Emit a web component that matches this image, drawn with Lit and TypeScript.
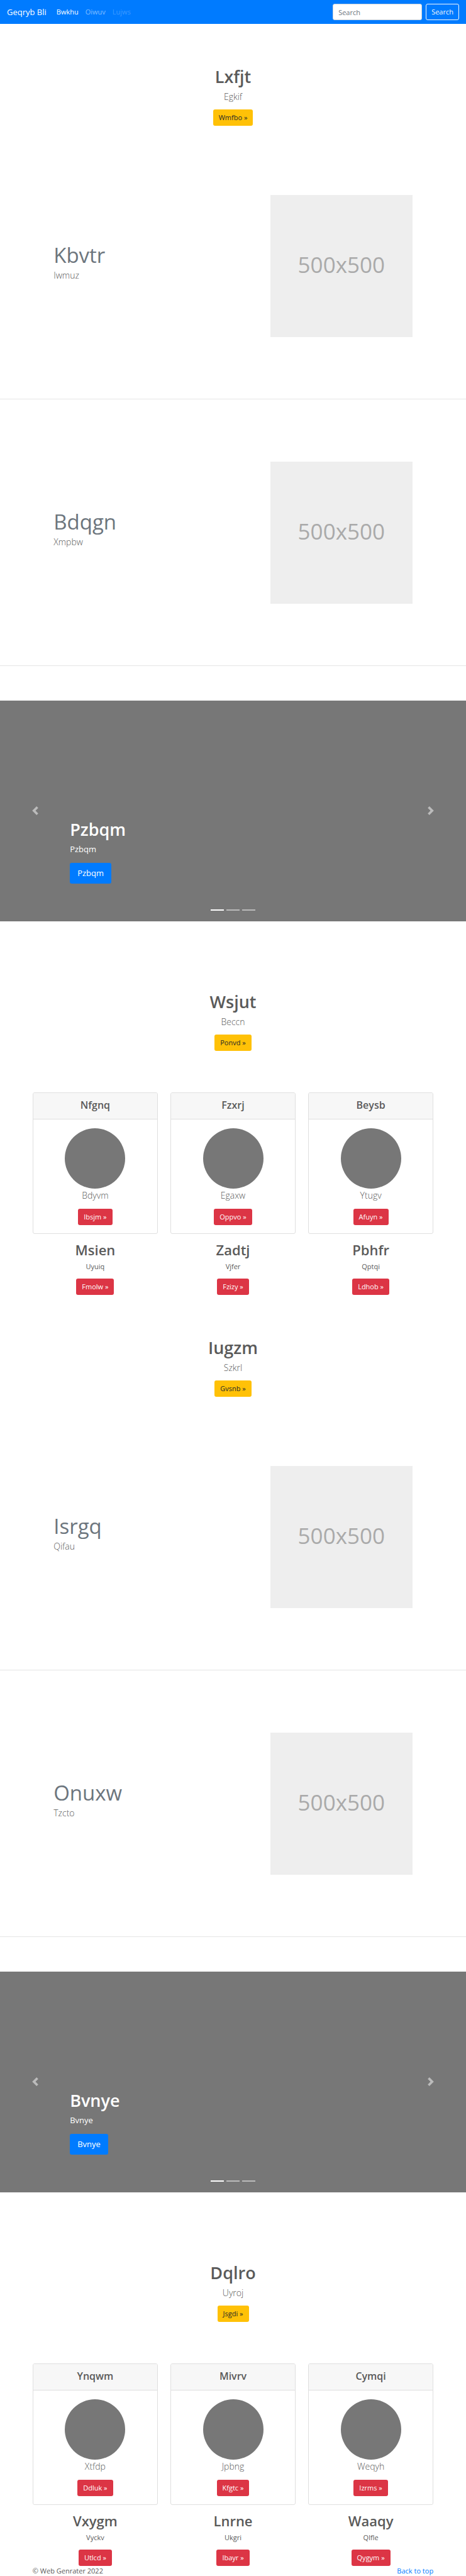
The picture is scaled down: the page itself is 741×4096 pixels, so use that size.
import { LitElement, html, css, svg } from "lit";
import { customElement, property, state } from "lit/decorators.js";
import { classMap } from "lit/directives/class-map.js";

const base = css`
  *,
  *::before,
  *::after {
    box-sizing: border-box;
  }
  h1,
  h2,
  h3,
  h4,
  p {
    margin: 0;
  }
  a {
    text-decoration: none;
  }
  .lead {
    font-size: 14px;
    line-height: 21px;
    font-weight: 300;
  }
  .btn {
    display: inline-block;
    height: 26px;
    padding: 0 8px;
    border: 1px solid transparent;
    border-radius: 3px;
    font: 400 11px/24px "Open Sans", "Noto Sans", sans-serif;
    white-space: nowrap;
    cursor: pointer;
  }
  .warning {
    background: #ffc107;
    color: #212529;
  }
  .danger {
    background: #dc3545;
    color: #fff;
  }
  .primary {
    background: #007bff;
    color: #fff;
  }
  .large {
    height: 33px;
    padding: 0 11px;
    font-size: 13px;
    line-height: 31px;
  }
`;

@customElement("site-nav")
export class SiteNav extends LitElement {
  static styles = [
    base,
    css`
      :host {
        display: block;
        background: #007bff;
      }
      .bar {
        display: flex;
        align-items: center;
        height: 38px;
        padding: 0 11px;
      }
      .brand {
        margin-right: 16px;
        color: #fff;
        font-size: 13px;
        line-height: 21px;
      }
      .links {
        display: flex;
        flex: 1;
        gap: 11px;
        margin: 0;
        padding: 0;
        list-style: none;
        line-height: 16px;
      }
      .link {
        color: rgba(255, 255, 255, 0.5);
      }
      .active {
        color: #fff;
      }
      .disabled {
        color: rgba(255, 255, 255, 0.25);
      }
      .search {
        display: flex;
        gap: 6px;
      }
      .field {
        width: 142px;
        height: 26px;
        padding: 0 8px;
        border: 1px solid #ced4da;
        border-radius: 3px;
        background: #fff;
        color: #495057;
        font: 400 11px/16px "Open Sans", "Noto Sans", sans-serif;
      }
      .field::placeholder {
        color: #6c757d;
        opacity: 1;
      }
      .outline {
        border-color: #f8f9fa;
        background: transparent;
        color: #f8f9fa;
      }
    `,
  ];

  render() {
    return html`
      <nav class="bar">
        <a class="brand" href="#">Geqryb Bli</a>
        <ul class="links">
          <li><a class="link active" href="#">Bwkhu</a></li>
          <li><a class="link" href="#">Oiwuv</a></li>
          <li><a class="link disabled" href="#" aria-disabled="true">Lujws</a></li>
        </ul>
        <form class="search" @submit=${(e: Event) => e.preventDefault()}>
          <input class="field" type="text" placeholder="Search" aria-label="Search" />
          <button class="btn outline" type="submit">Search</button>
        </form>
      </nav>
    `;
  }
}

@customElement("hero-block")
export class HeroBlock extends LitElement {
  @property() heading = "";
  @property() text = "";
  @property() action = "";

  static styles = [
    base,
    css`
      :host {
        display: block;
      }
      .hero {
        display: flex;
        flex-direction: column;
        align-items: center;
        padding: 67px 11px 66px;
      }
      .title {
        margin-bottom: 5px;
        font-size: 27px;
        line-height: 33px;
        font-weight: 600;
      }
      .lead {
        margin-bottom: 10px;
      }
    `,
  ];

  render() {
    return html`
      <section class="hero">
        <h1 class="title">${this.heading}</h1>
        <p class="lead">${this.text}</p>
        <a class="btn warning" href="#">${this.action} »</a>
      </section>
    `;
  }
}

@customElement("feature-row")
export class FeatureRow extends LitElement {
  @property() heading = "";
  @property() text = "";

  static styles = [
    base,
    css`
      :host {
        display: block;
      }
      .row {
        display: flex;
        align-items: center;
        justify-content: space-between;
        padding: 44px 11.5% 43px;
      }
      .title {
        margin-bottom: 1px;
        color: #6c757d;
        font-size: 33px;
        line-height: 41px;
        font-weight: 400;
      }
      .copy {
        padding-bottom: 13px;
      }
      .thumb {
        display: flex;
        align-items: center;
        justify-content: center;
        width: 39.6%;
        aspect-ratio: 1;
        padding-bottom: 4px;
        background: #eee;
        color: #aaa;
        font-size: 35px;
        line-height: 48px;
      }
      .rule {
        height: 1px;
        margin: 55px 0;
        border: 0;
        background: rgba(0, 0, 0, 0.1);
      }
    `,
  ];

  render() {
    return html`
      <section class="row">
        <div class="copy">
          <h2 class="title">${this.heading}</h2>
          <p class="lead">${this.text}</p>
        </div>
        <div class="thumb">500x500</div>
      </section>
      <hr class="rule" />
    `;
  }
}

@customElement("photo-carousel")
export class PhotoCarousel extends LitElement {
  @property() heading = "";
  @state() private slide = 0;

  static styles = [
    base,
    css`
      :host {
        display: block;
        margin-bottom: 44px;
      }
      .stage {
        position: relative;
        display: grid;
        grid-template-columns: 15% 1fr 15%;
        height: 351px;
        background: #777;
        color: #fff;
      }
      .control {
        display: flex;
        align-items: center;
        justify-content: center;
        padding: 0;
        border: 0;
        background: none;
        opacity: 0.5;
        cursor: pointer;
      }
      .caption {
        align-self: end;
        padding-bottom: 60px;
      }
      .title {
        margin-bottom: 5px;
        font-size: 27px;
        line-height: 33px;
        font-weight: 600;
      }
      .text {
        margin-bottom: 11px;
        font-size: 13px;
        line-height: 21px;
      }
      .dots {
        position: absolute;
        right: 0;
        bottom: 17px;
        left: 0;
        display: flex;
        justify-content: center;
        gap: 4px;
      }
      .dot {
        width: 21px;
        height: 2px;
        padding: 0;
        border: 0;
        background: #fff;
        opacity: 0.5;
        cursor: pointer;
      }
      .on {
        opacity: 1;
      }
    `,
  ];

  private move(step: number) {
    this.slide = (this.slide + step + 3) % 3;
  }

  private chevron(d: string) {
    return html`<svg width="14" height="14" viewBox="0 0 8 8" fill="#fff" aria-hidden="true">
      ${svg`<path d=${d} />`}
    </svg>`;
  }

  render() {
    return html`
      <section class="stage">
        <button class="control" aria-label="Previous" @click=${() => this.move(-1)}>
          ${this.chevron("M5.25 0l-4 4 4 4 1.5-1.5L4.25 4l2.5-2.5L5.25 0z")}
        </button>
        <div class="caption">
          <h1 class="title">${this.heading}</h1>
          <p class="text">${this.heading}</p>
          <a class="btn primary large" href="#">${this.heading}</a>
        </div>
        <button class="control" aria-label="Next" @click=${() => this.move(1)}>
          ${this.chevron("M2.75 0l-1.5 1.5L3.75 4l-2.5 2.5L2.75 8l4-4-4-4z")}
        </button>
        <div class="dots">
          ${[0, 1, 2].map(
            (n) => html`<button
              class=${classMap({ dot: true, on: n === this.slide })}
              aria-label="Slide ${n + 1}"
              @click=${() => (this.slide = n)}
            ></button>`
          )}
        </div>
      </section>
    `;
  }
}

type Item = [title: string, text: string, action: string];

@customElement("card-columns")
export class CardColumns extends LitElement {
  @property({ attribute: false }) cards: Item[] = [];
  @property({ attribute: false }) notes: Item[] = [];

  static styles = [
    base,
    css`
      :host {
        display: block;
        padding: 0 7%;
        text-align: center;
      }
      .grid {
        display: grid;
        grid-template-columns: repeat(3, 1fr);
        column-gap: 20px;
        row-gap: 12px;
      }
      .card {
        overflow: hidden;
        border: 1px solid #dfdfdf;
        border-radius: 3px;
        background: #fff;
      }
      .head {
        height: 42px;
        padding-top: 9px;
        border-bottom: 1px solid #dfdfdf;
        background: #f7f7f7;
        font-size: 16px;
        line-height: 20px;
        font-weight: 600;
      }
      .body {
        display: flex;
        flex-direction: column;
        align-items: center;
        padding: 14px 14px 13px;
      }
      .avatar {
        width: 96px;
        height: 96px;
        border-radius: 50%;
        background: #777;
      }
      .lead {
        margin-bottom: 11px;
      }
      .title {
        margin-bottom: 6px;
        font-size: 22px;
        line-height: 26px;
        font-weight: 600;
      }
      .text {
        margin-bottom: 11px;
        line-height: 16px;
      }
      .note {
        display: flex;
        flex-direction: column;
        align-items: center;
      }
    `,
  ];

  render() {
    return html`
      <section class="grid">
        ${this.cards.map(
          ([title, text, action]) => html`
            <article class="card">
              <h4 class="head">${title}</h4>
              <div class="body">
                <div class="avatar"></div>
                <p class="lead">${text}</p>
                <a class="btn danger" href="#">${action} »</a>
              </div>
            </article>
          `
        )}
        ${this.notes.map(
          ([title, text, action]) => html`
            <article class="note">
              <h2 class="title">${title}</h2>
              <p class="text">${text}</p>
              <a class="btn danger" href="#">${action} »</a>
            </article>
          `
        )}
      </section>
    `;
  }
}

@customElement("app-root")
export class AppRoot extends LitElement {
  static styles = [
    base,
    css`
      :host {
        display: block;
        background: #fff;
        color: #5a5a5a;
        font: 400 11px/16px "Open Sans", "Noto Sans", sans-serif;
      }
      .footer {
        display: flex;
        justify-content: space-between;
        padding: 0 7%;
      }
      .top {
        color: #007bff;
      }
    `,
  ];

  private firstCards: Item[] = [
    ["Nfgnq", "Bdyvm", "Ibsjm"],
    ["Fzxrj", "Egaxw", "Oppvo"],
    ["Beysb", "Ytugv", "Afuyn"],
  ];
  private firstNotes: Item[] = [
    ["Msien", "Uyuiq", "Fmolw"],
    ["Zadtj", "Vjfer", "Fzizy"],
    ["Pbhfr", "Qptqi", "Ldhob"],
  ];
  private lastCards: Item[] = [
    ["Ynqwm", "Xtfdp", "Ddluk"],
    ["Mivrv", "Jpbng", "Kfgtc"],
    ["Cymqi", "Weqyh", "Izrms"],
  ];
  private lastNotes: Item[] = [
    ["Vxygm", "Vyckv", "Utlcd"],
    ["Lnrne", "Ukgri", "Ibayr"],
    ["Waaqy", "Qlfle", "Qygym"],
  ];

  render() {
    return html`
      <header><site-nav></site-nav></header>
      <main>
        <hero-block heading="Lxfjt" text="Egkif" action="Wmfbo"></hero-block>
        <feature-row heading="Kbvtr" text="Iwmuz"></feature-row>
        <feature-row heading="Bdqgn" text="Xmpbw"></feature-row>
        <photo-carousel heading="Pzbqm"></photo-carousel>
        <hero-block heading="Wsjut" text="Beccn" action="Ponvd"></hero-block>
        <card-columns .cards=${this.firstCards} .notes=${this.firstNotes}></card-columns>
        <hero-block heading="Iugzm" text="Szkrl" action="Gvsnb"></hero-block>
        <feature-row heading="Isrgq" text="Qifau"></feature-row>
        <feature-row heading="Onuxw" text="Tzcto"></feature-row>
        <photo-carousel heading="Bvnye"></photo-carousel>
        <hero-block heading="Dqlro" text="Uyroj" action="Jsgdi"></hero-block>
        <card-columns .cards=${this.lastCards} .notes=${this.lastNotes}></card-columns>
      </main>
      <footer class="footer">
        <span>© Web Genrater 2022</span>
        <a class="top" href="#">Back to top</a>
      </footer>
    `;
  }
}
